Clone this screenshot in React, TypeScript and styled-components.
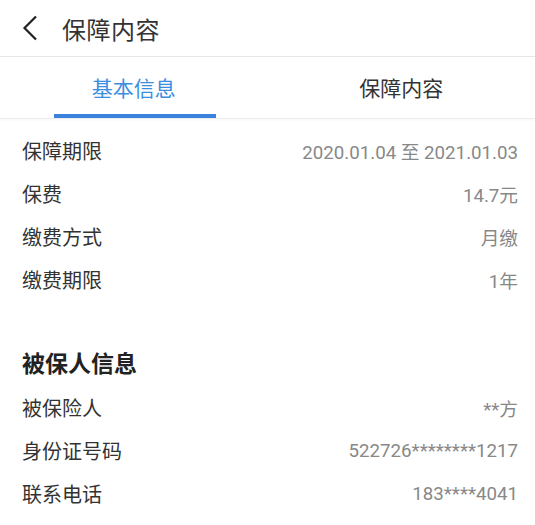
import React, { useState } from 'react';
import styled, { createGlobalStyle } from 'styled-components';

type Item = { label: string, value: string };

const policyItems: Item[] = [
  { label: '保障期限', value: '2020.01.04 至 2021.01.03' },
  { label: '保费', value: '14.7元' },
  { label: '缴费方式', value: '月缴' },
  { label: '缴费期限', value: '1年' },
];

const insuredItems: Item[] = [
  { label: '被保险人', value: '**方' },
  { label: '身份证号码', value: '522726********1217' },
  { label: '联系电话', value: '183****4041' },
];

const tabs = ['基本信息', '保障内容'];

function App() {
  const [active, setActive] = useState(0);
  return (
    <Page>
      <GlobalStyle />
      <Header>
        <BackButton aria-label="返回">
          <svg width="16" height="26" viewBox="0 0 16 26" fill="none">
            <path d="M14 1.5 L2.5 13 L14 24.5" stroke="#222" strokeWidth="2.2" />
          </svg>
        </BackButton>
        <Title>保障内容</Title>
      </Header>
      <TabBar>
        {tabs.map((t, i) => (
          <Tab key={t} $active={active === i} onClick={() => setActive(i)}>
            {t}
          </Tab>
        ))}
      </TabBar>
      <Content>
        {policyItems.map(it => (
          <Row key={it.label}>
            <Label>{it.label}</Label>
            <Value>{it.value}</Value>
          </Row>
        ))}
        <SectionTitle>被保人信息</SectionTitle>
        {insuredItems.map(it => (
          <Row key={it.label}>
            <Label>{it.label}</Label>
            <Value>{it.value}</Value>
          </Row>
        ))}
      </Content>
    </Page>
  );
}

export default App;

const GlobalStyle = createGlobalStyle`
  body {
    margin: 0;
    background: #fff;
    font-family: Roboto, "Noto Sans CJK SC", sans-serif;
  }
`

const Page = styled.div`
  width: 535px;
  background: #fff;
`

const Header = styled.div`
  display: flex;
  align-items: center;
  height: 56px;
  border-bottom: 1px solid #e6e6e6;
`

const BackButton = styled.button`
  display: flex;
  align-items: center;
  justify-content: center;
  margin-left: 21px;
  padding: 0;
  width: 17px;
  height: 26px;
  border: none;
  background: none;
`

const Title = styled.div`
  margin-left: 24px;
  font-size: 24px;
  color: #333;
  letter-spacing: 0.5px;
`

const TabBar = styled.div`
  display: flex;
  height: 61px;
  border-bottom: 1px solid #ececec;
  box-shadow: 0 1px 2px rgba(0, 0, 0, 0.04);
`

const Tab = styled.div<{ $active: boolean }>`
  position: relative;
  flex: 1;
  display: flex;
  align-items: center;
  justify-content: center;
  padding-bottom: 2px;
  font-size: 21px;
  color: ${props => props.$active ? '#3a8ee0' : '#333'};
  cursor: pointer;

  &::after {
    content: '';
    display: ${props => props.$active ? 'block' : 'none'};
    position: absolute;
    bottom: 0;
    left: 50%;
    width: 162px;
    margin-left: -80px;
    height: 4px;
    background: #3b82dc;
  }
`

const Content = styled.div`
  padding: 10px 17px 20px 22px;
`

const Row = styled.div`
  display: flex;
  align-items: center;
  justify-content: space-between;
  height: 43px;
`

const Label = styled.div`
  font-size: 20px;
  color: #333;
`

const Value = styled.div`
  font-size: 18.7px;
  color: #888;
`

const SectionTitle = styled.div`
  display: flex;
  align-items: center;
  height: 48px;
  margin-top: 37px;
  font-size: 23px;
  font-weight: bold;
  color: #222;
`
